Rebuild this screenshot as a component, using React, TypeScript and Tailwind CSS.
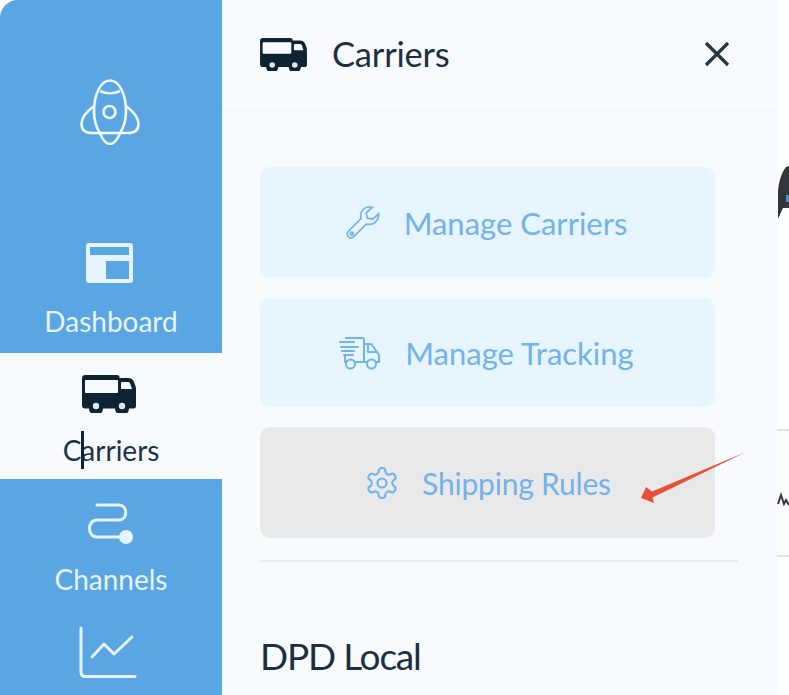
const F = "font-['Lato','Noto_Sans',sans-serif]";

function Truck({ className }: { className: string }) {
  return (
    <svg viewBox="0 0 54 38" className={className}>
      <path fill="#0f2333" fillRule="evenodd" d="M3 0h32c1.500 0 2.500 1 2.500 2v1H46c3 0 5 1.500 6 4l1.500 4c.4 1 .5 2 .5 3v17c0 1.500-1 2.500-2.500 2.500H47a7 7 0 0 1-14 0H21a7 7 0 0 1-14 0H3c-1.700 0-3-1.300-3-3V3C0 1.300 1.300 0 3 0Zm1 5c-.6 0-1 .4-1 1v11c0 .6.4 1 1 1h31c.6 0 1-.4 1-1V6c0-.6-.4-1-1-1H4Zm36 2c-.6 0-1 .4-1 1v5c0 .6.4 1 1 1h10l-1.500-4.500C48 7.500 47 7 45.500 7H40Z" />
      <circle cx="14" cy="31" r="7" fill="#0f2333" />
      <circle cx="40" cy="31" r="7" fill="#0f2333" />
      <circle cx="14" cy="31" r="3.200" fill="#dfe7ee" />
      <circle cx="40" cy="31" r="3.200" fill="#dfe7ee" />
    </svg>
  );
}

function Rocket() {
  return (
    <svg viewBox="0 0 60 66" className="w-[60px] h-[66px] mr-[3px]" fill="none" stroke="#f0f8ff" strokeWidth="2.600" strokeLinejoin="round">
      <path d="M30 1.500c10 0 16 15 16 31 0 9-3 17-6 21.500H20c-3-4.500-6-12.500-6-21.500C14 16.500 20 1.500 30 1.500Z" />
      <path d="M20 12c6 3 14 3 20 0" />
      <path d="M20 54c2 6 6 11 10 11s8-5 10-11" />
      <circle cx="29.500" cy="33" r="6" />
      <path d="M14 27C6 33 1.500 38 1.500 45c0 6 4 9 10.500 9h8" />
      <path d="M46 27c8 6 12.500 11 12.500 18 0 6-4 9-10.500 9h-8" />
    </svg>
  );
}

function NavLabel({ children, dark }: { children: string; dark?: boolean }) {
  return (
    <span className={`${F} text-[28px] leading-[30px] ${dark ? "text-[#1b3347]" : "text-[#e6f4ff]"}`}>
      {children}
    </span>
  );
}

function ActionButton({ icon, label, labelClass, gray, gap, height }: { icon: React.ReactNode; label: string; labelClass: string; gray?: boolean; gap: string; height: string }) {
  return (
    <div className={`${height} rounded-[10px] flex items-center justify-center ${gap} ${gray ? "bg-[#e9e9e9]" : "bg-[#e6f5ff]"}`}>
      {icon}
      <span className={`${F} ${labelClass} leading-[36px] text-[#74b2ea]`}>{label}</span>
    </div>
  );
}

export default function App() {
  return (
    <div className="relative w-[789px] h-[695px] overflow-hidden bg-white flex">
      <aside className="w-[222px] h-full shrink-0 bg-[#5aa6e3] rounded-tl-[18px] flex flex-col items-center overflow-hidden">
        <div className="pt-[79px] h-[243px] shrink-0"><Rocket /></div>
        <div className="flex flex-col items-center h-[110px] shrink-0">
          <svg viewBox="0 0 47 40" className="w-[47px] h-[40px] mr-[3px]">
            <path fill="#e6f4ff" fillRule="evenodd" d="M3 0h41a3 3 0 0 1 3 3v34a3 3 0 0 1-3 3H3a3 3 0 0 1-3-3V3a3 3 0 0 1 3-3Zm1 4v8h39V4H4Zm16 14v18h23V18H20Z" />
          </svg>
          <div className="mt-[23px]"><NavLabel>Dashboard</NavLabel></div>
        </div>
        <div className="w-full h-[126px] shrink-0 bg-[#f7fbff] flex flex-col items-center pt-[22px] relative">
          <Truck className="w-[54px] h-[38px] mr-[4px]" />
          <div className="mt-[22px]"><NavLabel dark>Carriers</NavLabel></div>
          <div className="absolute left-[81px] top-[78px] w-[3px] h-[38px] bg-[#0f2333]" />
        </div>
        <div className="flex flex-col items-center shrink-0 pt-[24px]">
          <svg viewBox="0 0 48 44" className="w-[48px] h-[44px] mr-[2px]" fill="none" stroke="#e6f4ff" strokeWidth="3" strokeLinecap="round">
            <path d="M11 2h22c9 0 9 15 0 15H11c-10 0-10 17 0 17h30" />
            <circle cx="40" cy="34" r="7" fill="#e6f4ff" stroke="none" />
          </svg>
          <div className="mt-[17px]"><NavLabel>Channels</NavLabel></div>
          <svg viewBox="0 0 58 52" className="w-[58px] h-[52px] mt-[30px] mr-[5px]" fill="none" stroke="#e6f4ff" strokeWidth="3" strokeLinecap="round" strokeLinejoin="round">
            <path d="M2 2v44c0 3 1.500 4.500 4.500 4.500H56" />
            <path d="M13 31 25 18l10 10 18-17" />
          </svg>
        </div>
      </aside>

      <main className="w-[555px] h-full shrink-0 bg-[#f7fbff]">
        <header className="h-[111px] border-b border-[#f0f4f8] pl-[38px] pr-[47px] pb-[2px] flex items-center">
          <Truck className="w-[47px] h-[33px]" />
          <span className={`${F} ml-[25px] text-[34.500px] leading-[40px] tracking-[-0.2px] text-[#1b2f40]`}>Carriers</span>
          <svg viewBox="0 0 26 26" className="w-[26px] h-[26px] ml-auto" fill="none" stroke="#26343f" strokeWidth="3.200">
            <path d="M2 2l22 22M24 2 2 24" />
          </svg>
        </header>
        <div className="pl-[38px] pr-[39px] pt-[56px]">
          <div className="w-[455px] flex flex-col gap-[20px]">
            <ActionButton
              height="h-[111px] pr-[2px]"
              gap="gap-[23px]"
              labelClass="text-[31px]"
              label="Manage Carriers"
              icon={
                <svg viewBox="0 0 36 36" className="w-[35px] h-[35px]" fill="none" stroke="#74b2ea" strokeWidth="1.800">
                  <path d="M24 2c-5 0-9 4-9 9 0 1 .2 2 .5 3L2.500 27c-1.500 1.800-1.500 4 0 5.500s3.800 1.500 5.500 0L21 19.500c1 .4 2 .5 3 .5 6 0 10-5 9.500-11l-6 5.500-5.500-1-1.200-5.500L27 2.500C26 2.200 25 2 24 2Z" />
                  <circle cx="6" cy="29.500" r="1.500" />
                </svg>
              }
            />
            <ActionButton
              height="h-[109px] pr-[2px]"
              gap="gap-[24px]"
              labelClass="text-[31px]"
              label="Manage Tracking"
              icon={
                <svg viewBox="0 0 42 34" className="w-[42px] h-[34px]" fill="none" stroke="#74b2ea" strokeWidth="2" strokeLinecap="round" strokeLinejoin="round">
                  <path d="M7 2h16c1.500 0 2 1 2 2v22H16" />
                  <path d="M1 6h14M2 11h17M3 15h12M5 19h9" />
                  <path d="M6 19v7h1" />
                  <path d="M25 8h6c1 0 2 .5 2.500 1.500L40 19v7h-3" />
                  <path d="M29 8v8h9" />
                  <path d="M25 26h3" />
                  <circle cx="11.500" cy="28" r="4.500" />
                  <circle cx="32.500" cy="28" r="4.500" />
                </svg>
              }
            />
            <ActionButton
              height="h-[111px]"
              gray
              gap="gap-[22px]"
              labelClass="text-[30px] tracking-[-0.2px]"
              label="Shipping Rules"
              icon={
                <svg viewBox="0 0 24 24" className="w-[36px] h-[36px]" fill="none" stroke="#74b2ea" strokeWidth="1.400" strokeLinecap="round" strokeLinejoin="round">
                  <path d="M12.220 2h-.440a2 2 0 0 0-2 2v.180a2 2 0 0 1-1 1.730l-.430.250a2 2 0 0 1-2 0l-.150-.080a2 2 0 0 0-2.730.730l-.220.380a2 2 0 0 0 .730 2.730l.150.100a2 2 0 0 1 1 1.720v.510a2 2 0 0 1-1 1.740l-.150.090a2 2 0 0 0-.730 2.730l.220.380a2 2 0 0 0 2.730.730l.150-.080a2 2 0 0 1 2 0l.430.250a2 2 0 0 1 1 1.730V20a2 2 0 0 0 2 2h.440a2 2 0 0 0 2-2v-.180a2 2 0 0 1 1-1.730l.430-.250a2 2 0 0 1 2 0l.150.080a2 2 0 0 0 2.730-.730l.220-.390a2 2 0 0 0-.730-2.730l-.150-.080a2 2 0 0 1-1-1.740v-.500a2 2 0 0 1 1-1.740l.150-.090a2 2 0 0 0 .730-2.730l-.220-.380a2 2 0 0 0-2.730-.730l-.150.080a2 2 0 0 1-2 0l-.430-.250a2 2 0 0 1-1-1.730V4a2 2 0 0 0-2-2z" />
                  <circle cx="12" cy="12" r="3" />
                </svg>
              }
            />
          </div>
          <div className="mt-[22px] h-[2px] bg-[#e4edf6]" />
          <div className={`${F} mt-[72px] text-[37px] leading-[44px] tracking-[-1.200px] text-[#1b2f40]`}>DPD Local</div>
        </div>
      </main>

      <div className="flex-1 h-full relative">
        <svg viewBox="0 0 12 55" className="absolute left-0 top-[165px] w-[12px] h-[55px]">
          <path fill="#33363b" d="M1 54V26C2 15 5 7 9 2l3-1v42H6L1 54Z" />
          <path fill="#4f8fd8" d="M9 30h3v7H9z" />
        </svg>
        <div className="absolute left-0 right-0 top-[429px] h-[128px] border-y-2 border-[#e2e2e2] bg-[#fbfbfb]" />
        <svg viewBox="0 0 12 16" className="absolute left-0 top-[492px] w-[12px] h-[16px]" fill="none" stroke="#333a45" strokeWidth="2">
          <path d="M1 12 4 3l3 9 2-4 3 5" />
        </svg>
      </div>

      <svg viewBox="0 0 789 695" className="absolute inset-0 w-[789px] h-[695px] pointer-events-none">
        <path fill="#e8503a" d="M746 452 652 491.500 646 487 641 498 654 503 652.500 497.500Z" />
      </svg>
    </div>
  );
}
